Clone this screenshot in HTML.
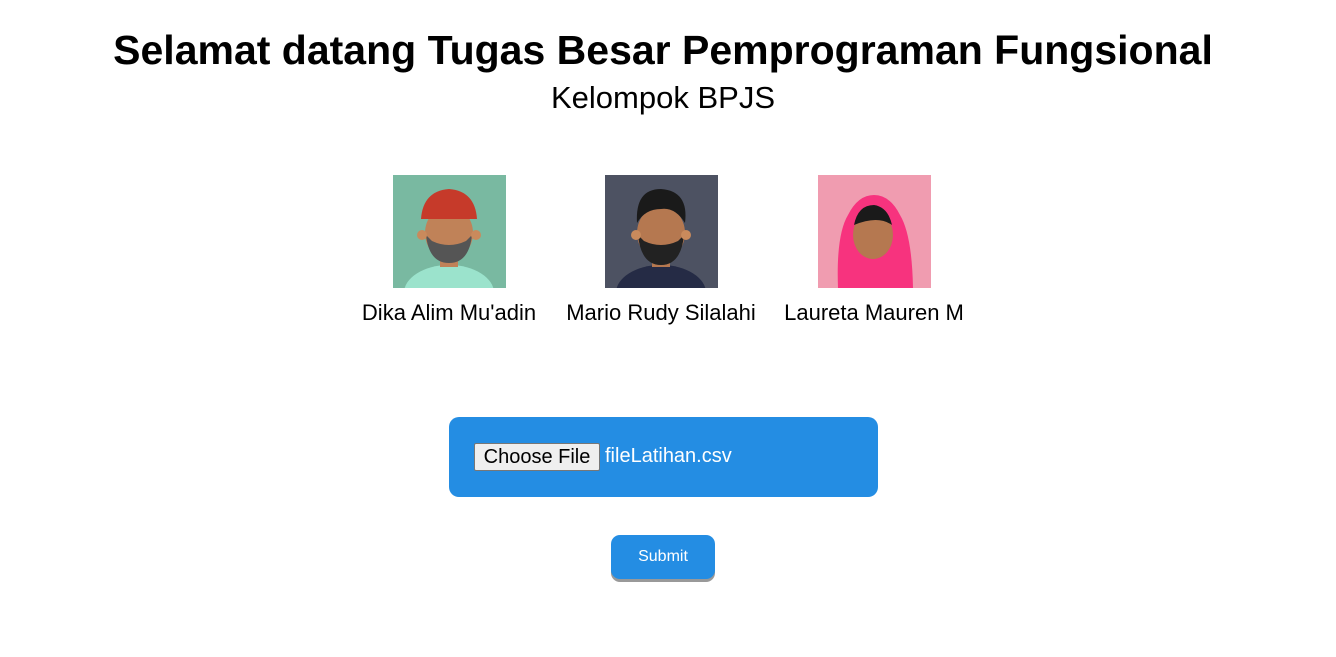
<!DOCTYPE html>
<html><head><meta charset="utf-8"><style>
body{margin:0;width:1336px;height:657px;background:#fff;position:relative;font-family:"Liberation Sans",sans-serif;overflow:hidden}
.t{position:absolute;left:0;width:1326px;text-align:center;color:#000}
h1{margin:0;font-size:41px;font-weight:bold;top:27px}
.sub{top:80px;font-size:31px}
.av{position:absolute;top:175px;width:113px;height:113px;overflow:hidden}
.nm{position:absolute;top:300px;font-size:22px;width:240px;text-align:center}
.box{position:absolute;left:449px;top:417px;width:429px;height:80px;background:#248de3;border-radius:10px}
.cf{position:absolute;left:25px;top:26px;width:124px;height:26px;border:1px solid #777;background:#efefef;border-radius:2px;font-size:20px;line-height:26px;text-align:center;color:#000}
.fn{position:absolute;left:156px;top:28px;font-size:20px;color:#fff}
.sb{position:absolute;left:611px;top:535px;width:104px;height:44px;background:#248de3;border-radius:9px;box-shadow:0 3px 0 #999;color:#fff;font-size:16px;text-align:center;line-height:44px}
</style></head><body>
<h1 class="t">Selamat datang Tugas Besar Pemprograman Fungsional</h1>
<div class="t sub">Kelompok BPJS</div>

<div class="av" style="left:393px;background:#79b9a1">
<svg width="113" height="113"><ellipse cx="56" cy="118" rx="45" ry="28" fill="#9be3cc"/><rect x="47" y="78" width="18" height="14" fill="#c08258"/><ellipse cx="56" cy="58" rx="24" ry="27" fill="#c08258"/><path d="M33 60 Q36 88 56 88 Q76 88 79 60 L73 66 Q56 74 39 66Z" fill="#555"/><path d="M28 44 Q30 16 56 14 Q82 16 84 44Z" fill="#c63a2a"/><circle cx="29" cy="60" r="5" fill="#c98a5c"/><circle cx="83" cy="60" r="5" fill="#c98a5c"/></svg></div>
<div class="av" style="left:605px;background:#4d5262">
<svg width="113" height="113"><ellipse cx="56" cy="118" rx="45" ry="28" fill="#252b45"/><rect x="47" y="78" width="18" height="14" fill="#b57850"/><ellipse cx="56" cy="58" rx="24" ry="27" fill="#b57850"/><path d="M33 60 Q36 90 56 90 Q76 90 79 60 L73 66 Q56 74 39 66Z" fill="#222"/><path d="M32 48 Q30 14 56 14 Q84 16 80 48 Q70 32 56 34 Q40 34 32 48Z" fill="#1a1a1a"/><circle cx="31" cy="60" r="5" fill="#c98a5c"/><circle cx="81" cy="60" r="5" fill="#c98a5c"/></svg></div>
<div class="av" style="left:818px;background:#f09cb0">
<svg width="113" height="113"><path d="M20 113 Q18 60 30 40 Q40 20 56 20 Q72 20 82 40 Q94 60 95 113Z" fill="#f7337e"/><ellipse cx="55" cy="60" rx="20" ry="24" fill="#b57850"/><path d="M36 50 Q40 30 56 30 Q70 32 74 50 Q60 40 36 50Z" fill="#1a1a1a"/></svg></div>

<div class="nm" style="left:329px">Dika Alim Mu'adin</div>
<div class="nm" style="left:541px">Mario Rudy Silalahi</div>
<div class="nm" style="left:754px">Laureta Mauren M</div>

<div class="box"><div class="cf">Choose File</div><div class="fn">fileLatihan.csv</div></div>
<div class="sb">Submit</div>
</body></html>
